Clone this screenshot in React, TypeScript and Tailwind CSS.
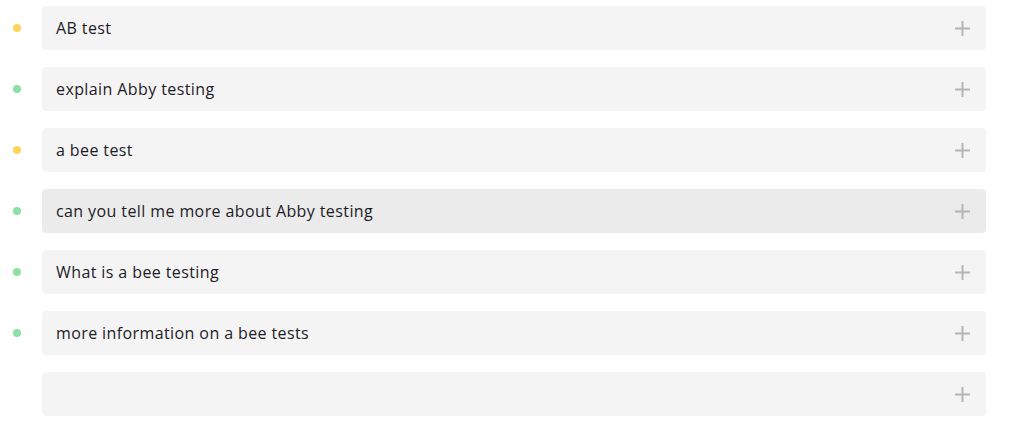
const rows = [
  { label: "AB test", dot: "bg-[#fdd55a]" },
  { label: "explain Abby testing", dot: "bg-[#8ce0a4]" },
  { label: "a bee test", dot: "bg-[#fdd55a]" },
  { label: "can you tell me more about Abby testing", dot: "bg-[#8ce0a4]", active: true },
  { label: "What is a bee testing", dot: "bg-[#8ce0a4]" },
  { label: "more information on a bee tests", dot: "bg-[#8ce0a4]" },
  { label: "", dot: "" },
];

function PlusIcon() {
  return (
    <svg width="15" height="15" viewBox="0 0 15 15" className="shrink-0">
      <path d="M7.5 0v15M0 7.5h15" stroke="#b5b5b5" strokeWidth="2" />
    </svg>
  );
}

export default function App() {
  return (
    <div className="w-[1009px] h-[428px] bg-white pt-[6px] font-['Open_Sans',sans-serif]">
      <ul className="flex flex-col gap-[17px]">
        {rows.map((row, i) => (
          <li key={i} className="flex items-center">
            <div className="w-[42px] pl-[13px] shrink-0">
              {row.dot && <span className={`block w-2 h-2 rounded-full ${row.dot}`} />}
            </div>
            <div
              className={`w-[944px] h-[44px] rounded-[4px] flex items-center justify-between pl-[14px] pr-[16px] ${
                row.active ? "bg-[#ebebeb]" : "bg-[#f4f4f4]"
              }`}
            >
              <span className="text-[16px] font-medium text-[#1d1b26] tracking-[0.4px]">{row.label}</span>
              <PlusIcon />
            </div>
          </li>
        ))}
      </ul>
    </div>
  );
}
